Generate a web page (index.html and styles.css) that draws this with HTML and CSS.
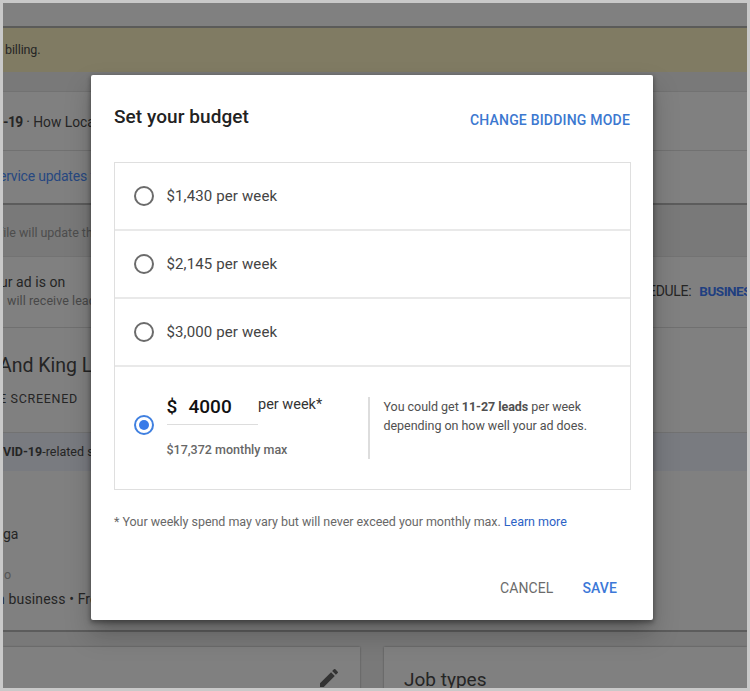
FILE: index.html
```html
<!DOCTYPE html>
<html lang="en">
<head>
<meta charset="utf-8">
<title>Set your budget</title>
<link rel="stylesheet" href="styles.css">
</head>
<body>
<div class="frame">
  <main class="page">
    <div class="topbar"></div>
    <div class="notice"><span class="notice-text">billing.</span></div>
    <section class="updates">
      <div class="updates-row"><p class="covid"><b>-19</b> · How Local</p></div>
      <div class="updates-row last"><a class="service">ervice updates f</a></div>
    </section>
    <p class="hint">file will update this</p>
    <section class="profile">
      <div class="status">
        <div>
          <p class="status-title">ur ad is on</p>
          <p class="status-sub">will receive leads</p>
        </div>
        <div class="schedule"><span>EDULE:</span><a>BUSINESS</a></div>
      </div>
      <div class="identity">
        <h2>And King Lo</h2>
        <p class="screened">E SCREENED</p>
      </div>
      <div class="band"><p><b>VID-19</b>-related s</p></div>
      <div class="details">
        <p class="city">ga</p>
        <p class="label">o</p>
        <p class="traits">n business • Free</p>
      </div>
    </section>
    <div class="cards">
      <section class="card left">
        <svg class="pencil" viewBox="0 0 24 24"><path d="M3 17.25V21h3.75L17.81 9.94l-3.75-3.75L3 17.25zM20.71 7.04a1 1 0 0 0 0-1.41l-2.34-2.34a1 1 0 0 0-1.41 0l-1.83 1.83 3.75 3.75 1.83-1.83z"/></svg>
      </section>
      <section class="card right"><h3>Job types</h3></section>
    </div>
  </main>

  <div class="dialog" role="dialog">
    <header class="dialog-head">
      <h1>Set your budget</h1>
      <a class="mode">CHANGE BIDDING MODE</a>
    </header>
    <div class="options">
      <div class="option"><i class="radio"></i><span>$1,430 per week</span></div>
      <div class="option"><i class="radio"></i><span>$2,145 per week</span></div>
      <div class="option"><i class="radio"></i><span>$3,000 per week</span></div>
      <div class="option custom">
        <i class="radio checked"></i>
        <div class="amount">
          <div class="amount-line">
            <div class="field"><span class="currency">$</span><span>4000</span></div>
            <span class="unit">per week*</span>
          </div>
          <p class="max">$17,372 monthly max</p>
        </div>
        <p class="estimate">You could get <b>11-27 leads</b> per week<br>depending on how well your ad does.</p>
      </div>
    </div>
    <p class="footnote">* Your weekly spend may vary but will never exceed your monthly max. <a>Learn more</a></p>
    <footer class="actions"><span class="cancel">CANCEL</span><span class="save">SAVE</span></footer>
  </div>
</div>
</body>
</html>
```

FILE: styles.css
```css
* { box-sizing: border-box; }
body { margin: 0; font-family: Roboto, "Liberation Sans", sans-serif; }
p, h1, h2, h3 { margin: 0; font-weight: 400; white-space: nowrap; }
b { font-weight: 700; }
.frame { position: relative; width: 750px; height: 691px; border: 3px solid #c9c9c9; overflow: hidden; }
.page { height: 685px; overflow: hidden; background: #797979; color: #252525; display: flex; flex-direction: column; }
.page > * { flex: none; }

.topbar { height: 25px; background: #808080; border-bottom: 2px solid #5b5b59; }
.notice { height: 44px; background: #807b63; padding: 13px 0 0 2px; font-size: 12.5px; line-height: 18px; letter-spacing: -.12px; }
.updates { margin-top: 19px; height: 114px; background: #808080; border-top: 1px solid #727272; border-bottom: 2px solid #5c5c5c; }
.updates-row { height: 59px; border-bottom: 1px solid #717171; display: flex; align-items: center; font-size: 14px; }
.updates-row.last { height: 50px; border: 0; }
.covid { padding-top: 1px; font-size: 13.8px; }
.covid b { letter-spacing: -.5px; }
.service { color: #274880; margin-left: -4px; white-space: nowrap; letter-spacing: -.22px; }
.hint { height: 51px; padding-top: 19px; margin-left: -4px; font-size: 12.5px; line-height: 18px; color: #4d4d4d; letter-spacing: -.03px; }

.profile { height: 376px; background: #808080; border-top: 1px solid #737373; border-bottom: 2px solid #5c5c5c; }
.status { height: 71px; border-bottom: 1px solid #707070; display: flex; justify-content: space-between; padding-top: 16px; }
.status-title { font-size: 14px; line-height: 19px; margin-left: -3px; letter-spacing: .05px; }
.status-sub { font-size: 12.5px; line-height: 18px; margin-left: 4px; color: #484848; letter-spacing: .06px; }
.schedule { display: flex; gap: 8px; width: 98px; padding-top: 8px; font-size: 14px; line-height: 20px; letter-spacing: -.3px; }
.schedule span { margin-left: -1px; }
.schedule a { color: #203f80; font-weight: 700; font-size: 13.5px; letter-spacing: -.5px; }
.identity { height: 105px; border-bottom: 1px solid #727272; padding-top: 26px; }
.identity h2 { font-size: 19.5px; line-height: 24px; margin-left: -4px; }
.screened { margin: 11px 0 0 -4px; font-size: 12.5px; line-height: 20px; letter-spacing: .7px; }
.band { height: 38px; background: #797b80; font-size: 12.5px; line-height: 37px; }
.details { padding-top: 53px; font-size: 14px; line-height: 20px; }
.label { margin: 21px 0 0 1px; font-size: 12.5px; color: #555; }
.traits { margin: 4px 0 0 -6px; letter-spacing: .15px; }

.cards { margin-top: 15px; display: flex; gap: 24px; }
.card { height: 60px; background: #808080; box-shadow: 0 0 2px rgba(0, 0, 0, .35); }
.left { width: 357px; display: flex; justify-content: flex-end; padding: 19px 19px 0 0; }
.pencil { width: 24px; height: 24px; fill: #333; }
.right { flex: 1; padding: 21px 0 0 20px; }
.right h3 { font-size: 19px; line-height: 24px; }

.dialog { position: absolute; left: 88px; top: 72px; width: 562px; height: 545px; padding: 0 23px; background: #fff; border-radius: 2px;
  box-shadow: 0 11px 15px -7px rgba(0, 0, 0, .2), 0 14px 26px 3px rgba(0, 0, 0, .16), 0 2px 4px 1px rgba(0, 0, 0, .3); }
.dialog-head { height: 87px; display: flex; justify-content: space-between; }
h1 { padding-top: 30px; font-size: 19px; line-height: 24px; color: #222; font-weight: 500; letter-spacing: .07px; }
.mode { padding-top: 35px; font-size: 14px; line-height: 20px; font-weight: 500; color: #3c78d0; letter-spacing: .2px; }
.options { width: 517px; height: 328px; border: 1px solid #dfdfdf; }
.option { height: 68px; border-bottom: 2px solid #e9e9e9; display: flex; align-items: center; padding-left: 18.5px; font-size: 15px; color: #444; letter-spacing: .13px; }
.radio { flex: none; width: 20px; height: 20px; border: 2px solid #6b6b6b; border-radius: 50%; margin-right: 13px; }
.checked { border-color: #4080e0; padding: 3px; }
.checked::before { content: ""; display: block; width: 10px; height: 10px; border-radius: 50%; background: #397be8; }
.custom { height: 122px; border: 0; align-items: flex-start; letter-spacing: 0; }
.custom .radio { margin-top: 48px; }
.amount { width: 201px; padding-top: 24px; }
.amount-line { display: flex; }
.field { width: 91.5px; height: 34px; border-bottom: 1px solid #ddd; font-size: 19px; line-height: 31px; color: #111; font-weight: 500; display: flex; }
.currency { width: 22px; }
.unit { font-size: 14.5px; line-height: 27px; color: #333; }
.max { margin-top: 15px; font-size: 12.5px; line-height: 20px; font-weight: 500; color: #666; }
.estimate { margin-top: 30px; height: 62px; border-left: 2px solid #ddd; padding-left: 14px; font-size: 12.5px; line-height: 19px; color: #505050; letter-spacing: -.04px; }
.footnote { margin-top: 21px; font-size: 12.5px; line-height: 21px; color: #686868; letter-spacing: -.035px; }
.footnote a { color: #2c62c5; }
.actions { margin-top: 46px; display: flex; justify-content: flex-end; gap: 29px; padding-right: 13px; font-size: 14px; line-height: 21px; color: #6b6b6b; letter-spacing: .1px; }
.save { color: #3c78d8; font-weight: 500; }
```
